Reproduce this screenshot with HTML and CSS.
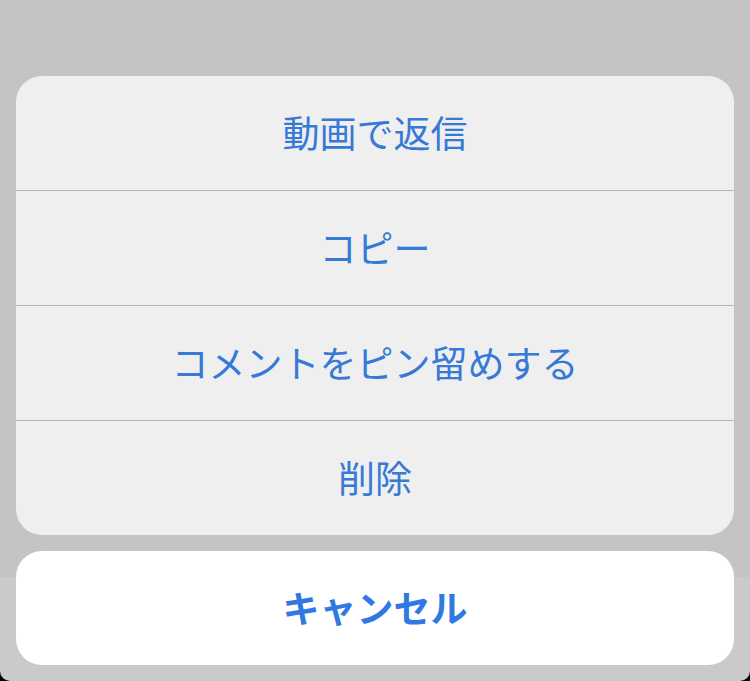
FILE: index.html
```html
<!DOCTYPE html>
<html lang="ja">
<head>
  <meta charset="UTF-8">
  <meta name="viewport" content="width=device-width, initial-scale=1.0">
  <title>コメント</title>
  <link rel="stylesheet" href="styles.css">
</head>
<body>
  <div class="screen">
    <div class="sheet">
      <div class="action">動画で返信</div>
      <div class="action">コピー</div>
      <div class="action">コメントをピン留めする</div>
      <div class="action">削除</div>
    </div>

    <div class="cancel">キャンセル</div>
  </div>
</body>
</html>
```

FILE: styles.css
```css
html {
  background-color: #000;
}

body {
  margin: 0;
  font-family: "Noto Sans CJK JP", "Noto Sans", sans-serif;
}

.screen {
  height: 681px;
  box-sizing: border-box;
  padding: 76px 16px 0;
  background: linear-gradient(#c4c4c4 577px, #cacaca 577px);
  border-radius: 0 0 10px 10px;
  display: flex;
  flex-direction: column;
  gap: 16px;
}

.sheet {
  background-color: #efefef;
  border-radius: 26px;
  overflow: hidden;
}

.action {
  height: 114px;
  box-sizing: border-box;
  padding-bottom: 3px;
  display: flex;
  align-items: center;
  justify-content: center;
  font-size: 37px;
  color: #3679d6;
  border-top: 1px solid #b4b4b4;
}

.action:first-child {
  height: 114px;
  border-top: none;
}

.action + .action {
  height: 115px;
}

.cancel {
  height: 114px;
  box-sizing: border-box;
  padding-bottom: 3px;
  background-color: #fff;
  border-radius: 26px;
  display: flex;
  align-items: center;
  justify-content: center;
  font-size: 37px;
  font-weight: bold;
  color: #3179e2;
}
```
